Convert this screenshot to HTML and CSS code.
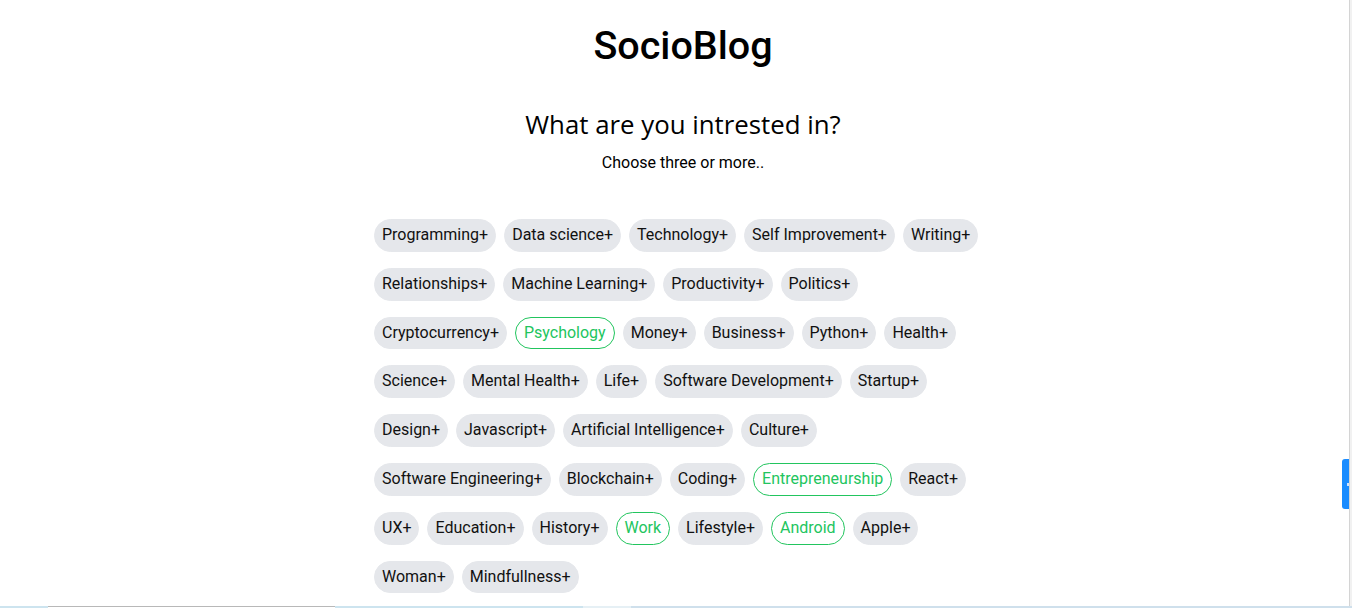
FILE: index.html
```html
<!DOCTYPE html>
<html lang="en">
<head>
<meta charset="utf-8">
<title>SocioBlog</title>
<link rel="stylesheet" href="styles.css">
</head>
<body>
<main class="page">
  <h1 class="brand">SocioBlog</h1>
  <h2 class="question">What are you intrested in?</h2>
  <p class="hint">Choose three or more..</p>
  <ul class="topics">
    <li class="chip">Programming+</li>
    <li class="chip">Data science+</li>
    <li class="chip">Technology+</li>
    <li class="chip">Self Improvement+</li>
    <li class="chip">Writing+</li>
    <li class="chip">Relationships+</li>
    <li class="chip">Machine Learning+</li>
    <li class="chip">Productivity+</li>
    <li class="chip">Politics+</li>
    <li class="chip">Cryptocurrency+</li>
    <li class="chip chip-selected">Psychology</li>
    <li class="chip">Money+</li>
    <li class="chip">Business+</li>
    <li class="chip">Python+</li>
    <li class="chip">Health+</li>
    <li class="chip">Science+</li>
    <li class="chip">Mental Health+</li>
    <li class="chip">Life+</li>
    <li class="chip">Software Development+</li>
    <li class="chip">Startup+</li>
    <li class="chip">Design+</li>
    <li class="chip">Javascript+</li>
    <li class="chip">Artificial Intelligence+</li>
    <li class="chip">Culture+</li>
    <li class="chip">Software Engineering+</li>
    <li class="chip">Blockchain+</li>
    <li class="chip">Coding+</li>
    <li class="chip chip-selected">Entrepreneurship</li>
    <li class="chip">React+</li>
    <li class="chip">UX+</li>
    <li class="chip">Education+</li>
    <li class="chip">History+</li>
    <li class="chip chip-selected">Work</li>
    <li class="chip">Lifestyle+</li>
    <li class="chip chip-selected">Android</li>
    <li class="chip">Apple+</li>
    <li class="chip">Woman+</li>
    <li class="chip">Mindfullness+</li>
  </ul>
</main>
<div class="side-rail"></div>
<div class="side-tab"><span class="side-tab-mark"></span></div>
<div class="taskbar">
  <span class="taskbar-gap"></span>
  <span class="taskbar-field"></span>
  <span class="taskbar-mid"></span>
  <span class="taskbar-light"></span>
  <span class="taskbar-rest"></span>
</div>
</body>
</html>
```

FILE: styles.css
```css
* { box-sizing: border-box; }

html, body {
  margin: 0;
  padding: 0;
  background: #ffffff;
  overflow: hidden;
}

body {
  font-family: Roboto, "Liberation Sans", Arial, sans-serif;
  color: #000;
}

.page {
  display: flex;
  flex-direction: column;
  align-items: center;
  padding-left: 14px;
  height: 608px;
}

.brand {
  margin: 22px 0 0;
  font-family: Roboto, sans-serif;
  font-weight: 500;
  font-size: 39.5px;
  line-height: 48px;
  letter-spacing: 0;
}

.question {
  margin: 37px 0 0;
  font-family: "Open Sans", "Noto Sans", sans-serif;
  font-weight: 400;
  font-size: 25.8px;
  line-height: 34px;
}

.hint {
  margin: 12px 0 0;
  font-size: 16px;
  line-height: 20px;
}

.topics {
  list-style: none;
  margin: 38px 0 0;
  padding: 0;
  width: 626px;
  display: flex;
  flex-wrap: wrap;
  align-content: flex-start;
}

.chip {
  margin: 8px 4px;
  padding: 6px 7px;
  border: 1px solid #e5e7eb;
  border-radius: 999px;
  background: #e5e7eb;
  color: #111;
  font-size: 16px;
  line-height: 18.8px;
  white-space: nowrap;
}

.chip-selected {
  padding: 6px 8px;
  background: #ffffff;
  border-color: #22c55e;
  color: #22c55e;
}

.side-rail {
  position: fixed;
  top: 0;
  right: 0;
  width: 3px;
  height: 608px;
  background: #f1f1f1;
  border-left: 1px solid #d4d4d4;
}

.side-tab {
  position: fixed;
  top: 459px;
  right: 3px;
  width: 7px;
  height: 50px;
  background: #1a8cff;
  border-radius: 3px 0 0 3px;
}

.side-tab-mark {
  position: absolute;
  top: 24px;
  right: 0;
  width: 2px;
  height: 3px;
  background: #cfe3ff;
}

.taskbar {
  position: fixed;
  left: 0;
  bottom: 0;
  width: 100%;
  height: 2px;
  display: flex;
}

.taskbar-gap { width: 48px; background: #cde4ef; }
.taskbar-field { width: 287px; background: #ffffff; border-top: 1px solid #b8b8b8; }
.taskbar-mid { width: 248px; background: #cde4ef; }
.taskbar-light { width: 48px; background: #e6f0f5; }
.taskbar-rest { flex: 1; background: #cfe0ec; }
```
